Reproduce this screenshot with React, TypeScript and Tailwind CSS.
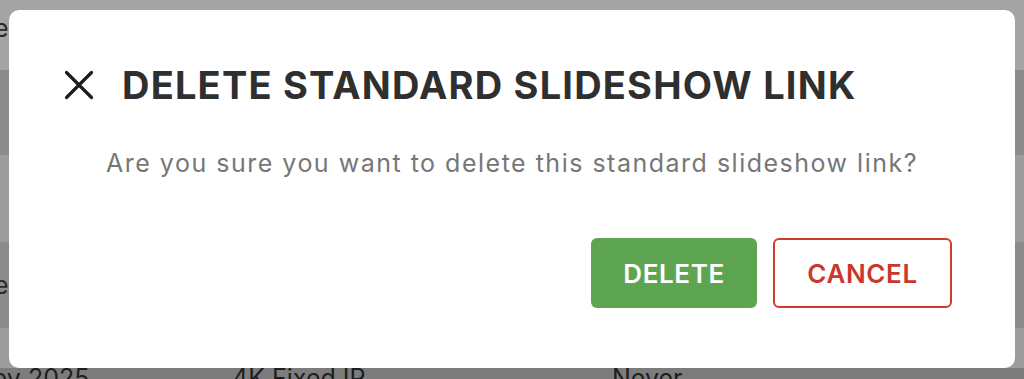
const font = { fontFamily: '"Inter", "Noto Sans", sans-serif' };

export default function App() {
  return (
    <div className="relative w-[1024px] h-[379px] overflow-hidden bg-[#9c9c9c]" style={font}>
      {/* dimmed table behind the dialog */}
      <div className="flex flex-col text-[25px] text-[#2a2a2a]">
        <div className="h-[70px] bg-[#a4a4a4] flex items-center">
          <span className="-ml-[6px] -mt-[12px]">e</span>
        </div>
        <div className="h-[85px] bg-[#8b8b8b]" />
        <div className="h-[87px] bg-[#9c9c9c]" />
        <div className="h-[86px] bg-[#8b8b8b] flex items-center">
          <span className="-ml-[6px] mt-[2px]">e</span>
        </div>
        <div className="h-[40px] bg-[#9c9c9c]" />
        <div className="h-[11px] bg-[#7c7c7c]">
          <div className="flex items-start text-[#1e1e1e] -mt-[2px] leading-none">
            <span className="-ml-[8px] w-[240px]">by 2025</span>
            <span className="w-[380px]">4K Fixed IR</span>
            <span>Never</span>
          </div>
        </div>
      </div>

      {/* dialog */}
      <div className="absolute left-[9px] top-[10px] w-[1006px] h-[358px] rounded-[10px] bg-white flex flex-col">
        <div className="flex items-center pl-[55px] pt-[56px]">
          <svg width="30" height="30" viewBox="0 0 30 30" className="text-[#1c1c1c]">
            <path d="M2.5 2.5 L27.5 27.5 M27.5 2.5 L2.5 27.5" stroke="currentColor" strokeWidth="3.2" strokeLinecap="round" fill="none" />
          </svg>
          <h2 className="ml-[28px] text-[38px] font-bold leading-none tracking-[1.2px] text-[#2f2f2f]">
            DELETE STANDARD SLIDESHOW LINK
          </h2>
        </div>
        <p className="mt-[47px] text-center text-[25px] leading-none tracking-[1.5px] text-[#777777]">
          Are you sure you want to delete this standard slideshow link?
        </p>
        <div className="mt-[62px] flex justify-end gap-[16px] pr-[63px]">
          <button className="w-[166px] h-[70px] rounded-[6px] bg-[#5ea552] text-white text-[26px] font-semibold tracking-[0.6px]">
            DELETE
          </button>
          <button className="w-[179px] h-[70px] rounded-[6px] border-2 border-[#d33a2f] bg-white text-[#c9382c] text-[26px] font-semibold tracking-[0.6px]">
            CANCEL
          </button>
        </div>
      </div>
    </div>
  );
}
